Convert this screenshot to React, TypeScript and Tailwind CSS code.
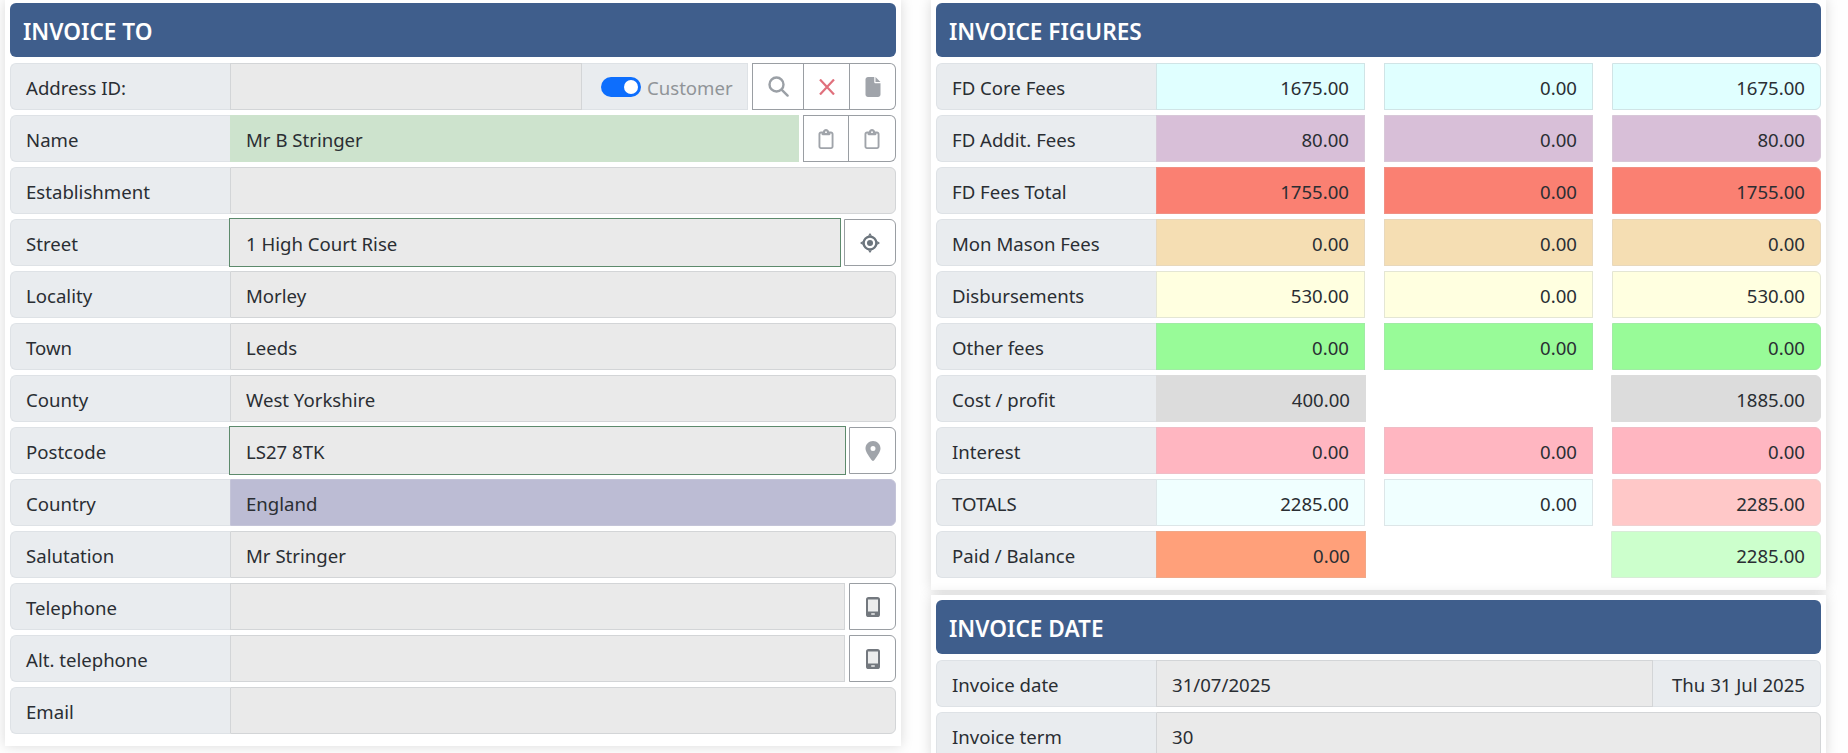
import React from "react";
import { FaFile, FaRegClipboard, FaLocationDot } from "react-icons/fa6";

const Header = ({ children }: { children: React.ReactNode }) => (
  <div className="h-[54px] flex items-center rounded-[6px] bg-[#3f5e8c] px-[13px] pt-[5px] text-[22.6px] font-semibold text-white mb-[6px]">{children}</div>
);

const Label = ({ children }: { children: React.ReactNode }) => (
  <div className="w-[220px] shrink-0 flex items-center pl-[15px] pt-[3px] h-full rounded-l-[6px] bg-[#e9ecef] border border-[#dee2e6] border-r-0">{children}</div>
);

const Btn = ({ children, cls = "" }: { children: React.ReactNode; cls?: string }) => (
  <div className={"flex items-center justify-center h-full bg-white border border-[#9a9ea3] " + cls}>{children}</div>
);

const Field = ({ label, value, cls = "bg-[#eaeaea] border-[#d3d5d7] rounded-r-[6px]" }: { label: string; value?: string; cls?: string }) => (
  <div className="flex h-[47px]">
    <Label>{label}</Label>
    <div className={"flex-1 flex items-center pl-[15px] pt-[3px] h-full border " + cls}>{value}</div>
  </div>
);

const InputBtn = ({ label, value, children, green, cls = "pl-[15px] bg-[#eaeaea] border border-[#d3d5d7]" }: { label: string; value?: string; children: React.ReactNode; green?: boolean; cls?: string }) => (
  <div className="flex h-[47px]">
    <Label>{label}</Label>
    <div className={"flex-1 flex items-center pt-[3px] h-full " + (green ? "relative pl-[16px] bg-[#eaeaea] outline outline-1 outline-[#5d8a6c]" : cls)}>{value}</div>
    {children}
  </div>
);

const Num = ({ v, bg, r, cls = "" }: { v?: string; bg: string; r?: boolean; cls?: string }) => (
  <div className={"flex items-center justify-end pr-[15px] pt-[3px] h-full border " + bg + (r ? " rounded-r-[6px] " : " ") + cls}>{v}</div>
);

const SearchIcon = () => (
  <svg width="21" height="21" viewBox="0 0 21 21" fill="none" stroke="#9ba0a6" strokeWidth="2.4" strokeLinecap="round">
    <circle cx="8.5" cy="8.5" r="7" />
    <path d="M13.8 13.8 L19.6 19.6" />
  </svg>
);

const XIcon = () => (
  <svg width="16" height="16" viewBox="0 0 16 16" fill="none" stroke="#e0707c" strokeWidth="2.2" strokeLinecap="butt">
    <path d="M1 0.5 L15 15.5 M15 0.5 L1 15.5" />
  </svg>
);

const TargetIcon = () => (
  <svg width="20" height="20" viewBox="0 0 20 20">
    <circle cx="10" cy="10" r="6.4" fill="none" stroke="#6c757d" strokeWidth="2.4" />
    <circle cx="10" cy="10" r="3" fill="#6c757d" />
    <path d="M8 2.8 L10 0 L12 2.8 Z M8 17.2 L10 20 L12 17.2 Z M2.8 8 L0 10 L2.8 12 Z M17.2 8 L20 10 L17.2 12 Z" fill="#6c757d" />
  </svg>
);

const PhoneIcon = () => (
  <svg width="14" height="20" viewBox="0 0 14 20">
    <rect x="0" y="0" width="14" height="20" rx="2.6" fill="#73787e" />
    <rect x="2" y="2.5" width="10" height="12" fill="#eceded" />
    <rect x="5" y="16.2" width="4" height="1.6" rx="0.8" fill="#eceded" />
  </svg>
);

type Row = [string, string, string, string, string];
const figures: Row[] = [
  ["FD Core Fees", "1675.00", "0.00", "1675.00", "bg-[#e0ffff] border-[#d0e4e6]"],
  ["FD Addit. Fees", "80.00", "0.00", "80.00", "bg-[#d8bfd8] border-[#d8c8d8]"],
  ["FD Fees Total", "1755.00", "0.00", "1755.00", "bg-[#fa8072] border-[#f09084]"],
  ["Mon Mason Fees", "0.00", "0.00", "0.00", "bg-[#f5deb3] border-[#e8d8bc]"],
  ["Disbursements", "530.00", "0.00", "530.00", "bg-[#ffffe0] border-[#e4e6d4]"],
  ["Other fees", "0.00", "0.00", "0.00", "bg-[#98fb98] border-[#a0eca4]"],
];

const gridCls = "grid grid-cols-[429px_209px_209px] gap-x-[19px] h-[47px]";

export default function App() {
  return (
    <div className="h-screen overflow-hidden bg-[#fefefe] flex gap-[30px] pl-[5px] text-[18.6px] leading-none text-[#2a2e33] font-['Noto_Sans',sans-serif]">
      <div className="w-[896px] h-[746px] bg-white px-[5px] pt-[3px] shadow-[0_0_12px_rgba(0,0,0,0.15)]">
        <Header>INVOICE TO</Header>
        <div className="flex flex-col gap-[5px]">
          <div className="flex h-[47px]">
            <Label>Address ID:</Label>
            <div className="w-[352px] h-full bg-[#eaeaea] border border-[#d3d5d7]" />
            <div className="w-[166px] h-full flex items-center pl-[19px] gap-[6px] bg-[#e9ecef] border border-[#dee2e6] border-l-0 text-[#909498]">
              <span className="w-[40px] h-[20px] rounded-full bg-[#0d6efd] flex justify-end items-center pr-[3px]"><span className="w-[14px] h-[14px] rounded-full bg-white" /></span>
              <span className="pt-[3px]">Customer</span>
            </div>
            <div className="flex flex-1 h-full ml-[4px]">
              <Btn cls="w-[52px]"><SearchIcon /></Btn>
              <Btn cls="w-[46px] border-l-0"><XIcon /></Btn>
              <Btn cls="flex-1 border-l-0 rounded-r-[6px]"><FaFile className="text-[#a0a4aa] text-[20px]" /></Btn>
            </div>
          </div>
          <InputBtn label="Name" value="Mr B Stringer" cls="pl-[15px] bg-[#cde3cd] border border-[#cde3cd]">
            <div className="flex w-[93px] h-full ml-[4px]">
              <Btn cls="w-[46px]"><FaRegClipboard className="text-[#a0a4aa] text-[20px]" /></Btn>
              <Btn cls="flex-1 border-l-0 rounded-r-[6px]"><FaRegClipboard className="text-[#a0a4aa] text-[20px]" /></Btn>
            </div>
          </InputBtn>
          <Field label="Establishment" />
          <InputBtn label="Street" value="1 High Court Rise" green>
            <Btn cls="w-[52px] ml-[4px] rounded-r-[6px] border-[#6c757d]"><TargetIcon /></Btn>
          </InputBtn>
          <Field label="Locality" value="Morley" />
          <Field label="Town" value="Leeds" />
          <Field label="County" value="West Yorkshire" />
          <InputBtn label="Postcode" value="LS27 8TK" green>
            <Btn cls="w-[47px] ml-[4px] rounded-r-[6px]"><FaLocationDot className="text-[#a0a4aa] text-[20px]" /></Btn>
          </InputBtn>
          <Field label="Country" value="England" cls="bg-[#bcbcd4] border-[#c4c4d8] rounded-r-[6px]" />
          <Field label="Salutation" value="Mr Stringer" />
          <InputBtn label="Telephone">
            <Btn cls="w-[47px] ml-[4px] rounded-r-[6px] border-[#6c757d]"><PhoneIcon /></Btn>
          </InputBtn>
          <InputBtn label="Alt. telephone">
            <Btn cls="w-[47px] ml-[4px] rounded-r-[6px] border-[#6c757d]"><PhoneIcon /></Btn>
          </InputBtn>
          <Field label="Email" />
        </div>
      </div>
      <div className="w-[895px] flex flex-col gap-[5px]">
        <div className="h-[590px] shrink-0 bg-white px-[5px] pt-[3px] shadow-[0_0_12px_rgba(0,0,0,0.15)]">
          <Header>INVOICE FIGURES</Header>
          <div className="flex flex-col gap-[5px]">
            {figures.map((f) => (
              <div key={f[0]} className={gridCls}>
                <div className="flex h-full">
                  <Label>{f[0]}</Label>
                  <div className="flex-1"><Num v={f[1]} bg={f[4]} /></div>
                </div>
                <Num v={f[2]} bg={f[4]} />
                <Num v={f[3]} bg={f[4]} r />
              </div>
            ))}
            <div className={gridCls}>
              <div className="flex h-full"><Label>Cost / profit</Label><div className="flex-1"><Num v="400.00" bg="bg-[#dcdcdc] border-[#dcdcdc]" cls="-mr-px" /></div></div>
              <div />
              <Num v="1885.00" bg="bg-[#dcdcdc] border-[#dcdcdc]" r cls="-ml-px" />
            </div>
            <div className={gridCls}>
              <div className="flex h-full"><Label>Interest</Label><div className="flex-1"><Num v="0.00" bg="bg-[#ffb6c1] border-[#f0bcc6]" /></div></div>
              <Num v="0.00" bg="bg-[#ffb6c1] border-[#f0bcc6]" />
              <Num v="0.00" bg="bg-[#ffb6c1] border-[#f0bcc6]" r />
            </div>
            <div className={gridCls}>
              <div className="flex h-full"><Label>TOTALS</Label><div className="flex-1"><Num v="2285.00" bg="bg-[#f0ffff] border-[#dde6e8]" /></div></div>
              <Num v="0.00" bg="bg-[#f0ffff] border-[#dde6e8]" />
              <Num v="2285.00" bg="bg-[#ffc8c8] border-[#f0d0d0]" r />
            </div>
            <div className={gridCls}>
              <div className="flex h-full"><Label>Paid / Balance</Label><div className="flex-1"><Num v="0.00" bg="bg-[#ffa07a] border-[#f0a888]" cls="-mr-px" /></div></div>
              <div />
              <Num v="2285.00" bg="bg-[#ccffcc] border-[#d8ecd8]" r cls="-ml-px" />
            </div>
          </div>
        </div>
        <div className="flex-1 bg-white px-[5px] pt-[5px] shadow-[0_0_12px_rgba(0,0,0,0.15)]">
          <Header>INVOICE DATE</Header>
          <div className="flex flex-col gap-[5px]">
            <div className="flex h-[47px]">
              <Label>Invoice date</Label>
              <div className="flex-1 flex items-center pl-[15px] pt-[3px] h-full bg-[#eaeaea] border border-[#d3d5d7]">31/07/2025</div>
              <div className="w-[168px] h-full flex items-center justify-end pr-[15px] pt-[3px] rounded-r-[6px] bg-[#e9ecef] border border-[#dee2e6] border-l-0">Thu 31 Jul 2025</div>
            </div>
            <Field label="Invoice term" value="30" />
          </div>
        </div>
      </div>
    </div>
  );
}
